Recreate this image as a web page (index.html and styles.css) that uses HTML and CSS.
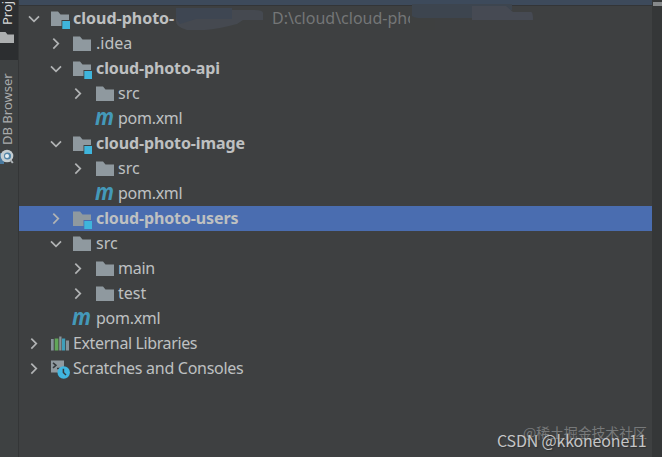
FILE: index.html
```html
<!DOCTYPE html>
<html lang="en">
<head>
<meta charset="utf-8">
<title>Project</title>
<link rel="stylesheet" href="styles.css">
</head>
<body>
<svg class="defs" width="0" height="0">
  <symbol id="down" viewBox="0 0 12 12"><path class="stroke" d="M1 3.3 6 8.4 11 3.3"/></symbol>
  <symbol id="right" viewBox="0 0 12 12"><path class="stroke" d="M3.3 .6 8.3 5.6 3.3 10.6"/></symbol>
  <symbol id="folder" viewBox="0 0 20 20"><path class="folder" d="M1 2.5h7l2.5 3H19v11.5H1z"/></symbol>
  <symbol id="module" viewBox="0 0 20 20"><path class="folder" d="M1 2.5h7l2.5 3H19V11h-7.5v6H1z"/><path class="cyan" d="M12.3 12H20v8h-7.7z"/></symbol>
  <symbol id="maven" viewBox="0 0 20 20"><text class="maven" x="0" y="16" textLength="19" lengthAdjust="spacingAndGlyphs">m</text></symbol>
  <symbol id="library" viewBox="0 0 20 20"><path class="gray" d="M1 5h2.7v11.5H1zM9.2 2.5h2.3v14H9.2zM16 6.5h3v10h-3z"/><path class="green" d="M4.7 4.5h3.7v12H4.7z"/><path class="teal" d="M12 4.5h3.2v12H12z"/></symbol>
  <symbol id="scratch" viewBox="0 0 20 20"><path class="folder" d="M1 1.5h13v6L8 11.5v2H1z"/><path class="prompt" d="m3 3.8 3 2.5-3 2.6M7 9.5h3"/><circle class="clock" cx="13.7" cy="13.5" r="6.2"/><path class="hands" d="M13.4 9.7v3.8l2.6 2.5"/></symbol>
</svg>
<div class="window">
  <aside class="stripe">
    <div class="tab active">
      <span class="label">Proj</span>
      <svg class="tab-icon" width="14" height="13" viewBox="0 0 14 13"><path class="tab-folder" d="M0 1h5.5l2 2.5H14V12H0z"/></svg>
    </div>
    <div class="tab">
      <span class="label db">DB Browser</span>
      <svg class="tab-icon" width="15" height="18" viewBox="0 0 15 18"><path d="M0 5h4v11H0z" fill="#49799e"/><circle cx="7" cy="8" r="6.3" fill="#c4cdd1"/><circle cx="7.5" cy="8" r="3.6" fill="#5386a8"/><circle cx="7" cy="8" r="2" fill="#e7eff3"/><path d="m10.5 12 2.3 3" stroke="#aeb4b7" stroke-width="2"/></svg>
    </div>
  </aside>
  <main class="panel">
    <div class="header"></div>
    <div class="tree">
      <div class="row l0"><svg class="chev"><use href="#down"/></svg><svg class="icon"><use href="#module"/></svg><b class="root">cloud-photo-</b><span class="path">D:\cloud\cloud-pho</span>
        <svg class="smudge" width="520" height="30" viewBox="0 0 520 30"><path fill="#454950" d="M157 12q0-2 4-2h74q10 0 9 4v6h-20l-6 4q-30 8-50 6-12-3-11-10z"/><path fill="#3e4652" d="M157 8h56v11h-36l-16 5q-4-4-4-9z"/><path fill="#3e4040" d="M391 8h25v22h-25z"/><path fill="#3d454f" d="M393 4h100v6H475v8h-73q-6 0-9-2z"/><path fill="#464a53" d="M453 6h34l7 6h18q2 0 2 8h-61z"/></svg>
      </div>
      <div class="row l1"><svg class="chev"><use href="#right"/></svg><svg class="icon"><use href="#folder"/></svg><span>.idea</span></div>
      <div class="row l1"><svg class="chev"><use href="#down"/></svg><svg class="icon"><use href="#module"/></svg><b>cloud-photo-api</b></div>
      <div class="row l2"><svg class="chev"><use href="#right"/></svg><svg class="icon"><use href="#folder"/></svg><span>src</span></div>
      <div class="row l2"><svg class="chev"></svg><svg class="icon"><use href="#maven"/></svg><span class="file">pom.xml</span></div>
      <div class="row l1"><svg class="chev"><use href="#down"/></svg><svg class="icon"><use href="#module"/></svg><b>cloud-photo-image</b></div>
      <div class="row l2"><svg class="chev"><use href="#right"/></svg><svg class="icon"><use href="#folder"/></svg><span>src</span></div>
      <div class="row l2"><svg class="chev"></svg><svg class="icon"><use href="#maven"/></svg><span class="file">pom.xml</span></div>
      <div class="row l1 selected"><svg class="chev"><use href="#right"/></svg><svg class="icon"><use href="#module"/></svg><b>cloud-photo-users</b></div>
      <div class="row l1"><svg class="chev"><use href="#down"/></svg><svg class="icon"><use href="#folder"/></svg><span>src</span></div>
      <div class="row l2"><svg class="chev"><use href="#right"/></svg><svg class="icon"><use href="#folder"/></svg><span class="file">main</span></div>
      <div class="row l2"><svg class="chev"><use href="#right"/></svg><svg class="icon"><use href="#folder"/></svg><span>test</span></div>
      <div class="row l1"><svg class="chev"></svg><svg class="icon"><use href="#maven"/></svg><span class="file">pom.xml</span></div>
      <div class="row l0"><svg class="chev"><use href="#right"/></svg><svg class="icon"><use href="#library"/></svg><span class="libs">External Libraries</span></div>
      <div class="row l0"><svg class="chev"><use href="#right"/></svg><svg class="icon"><use href="#scratch"/></svg><span class="file">Scratches and Consoles</span></div>
    </div>
  </main>
  <div class="gutter"><div class="mark"></div></div>
  <div class="juejin">@稀土掘金技术社区</div>
  <div class="csdn">CSDN @kkoneone11</div>
</div>
</body>
</html>
```
FILE: styles.css
```css
body { margin: 0; background: #3e4041; overflow: hidden; }
.defs { position: absolute; }
.window {
  position: relative;
  display: flex;
  width: 662px;
  height: 457px;
  overflow: hidden;
  color: #bec0c1;
  font: 16px/25px "Noto Sans", "Open Sans", sans-serif;
}
.stripe { width: 18px; flex: none; border-right: 1px solid #343637; background: #3e4142; }
.tab { display: flex; flex-direction: column; align-items: flex-start; padding-top: 13px; }
.tab.active { box-sizing: border-box; height: 60px; padding-top: 0; background: #2c2e30; color: #d5d6d7; }
.label {
  writing-mode: vertical-rl;
  transform: rotate(180deg);
  font-size: 13px;
  line-height: 14px;
  white-space: nowrap;
}
.active .label { height: 25px; margin-bottom: 6px; }
.label.db { height: 72px; margin-bottom: 3px; color: #a9abac; }
.tab-icon { display: block; flex: none; }
.tab-folder { fill: #adafb0; }
.panel { flex: 1; min-width: 0; }
.header { height: 5px; border-bottom: 1px solid #333537; background: #3d4a5b; }
.row { position: relative; display: flex; align-items: center; height: 25px; white-space: nowrap; }
.l0 { padding-left: 9px; }
.l1 { padding-left: 31px; }
.l2 { padding-left: 53px; }
.selected { background: #4a6db0; }
.chev { width: 12px; height: 12px; margin-right: 10px; flex: none; }
.icon { width: 20px; height: 20px; margin-right: 3px; flex: none; }
.l1 .icon { margin-right: 4px; }
.l2 .chev { margin-right: 11px; }
b { letter-spacing: -0.12px; }
.file { letter-spacing: -0.28px; }
.libs { letter-spacing: -0.38px; }
.selected .folder { fill: #a5b0bd; }
.root { width: 98px; letter-spacing: 0; }
.path { margin-left: 101px; color: #747677; }
.smudge { position: absolute; left: 0; top: -6px; }
.stroke { fill: none; stroke: #b1b3b4; stroke-width: 1.7; }
.folder { fill: #8f999f; }
.cyan { fill: #3fb5dc; }
.maven { fill: #4499b9; font: italic bold 24px/1 "Open Sans", sans-serif; }
.gray { fill: #87939a; }
.green { fill: #62a65a; }
.teal { fill: #3f9fbb; }
.clock { fill: #40b6e0; }
.prompt, .hands { fill: none; stroke: #34393c; stroke-width: 1.5; }
.gutter { width: 10px; flex: none; background: #353738; }
.mark { height: 4px; margin-top: 2px; margin-left: 1px; background: #86898b; }
.juejin, .csdn { position: absolute; white-space: nowrap; line-height: 20px; font-family: "Noto Sans CJK SC", sans-serif; }
.juejin { left: 523px; top: 422px; color: #77797a; font-size: 14px; letter-spacing: -0.15px; }
.csdn { left: 497px; top: 430px; color: #c4c5c6; font-size: 16px; letter-spacing: -0.18px; text-shadow: 1px 1px 1px #303233; }
```
